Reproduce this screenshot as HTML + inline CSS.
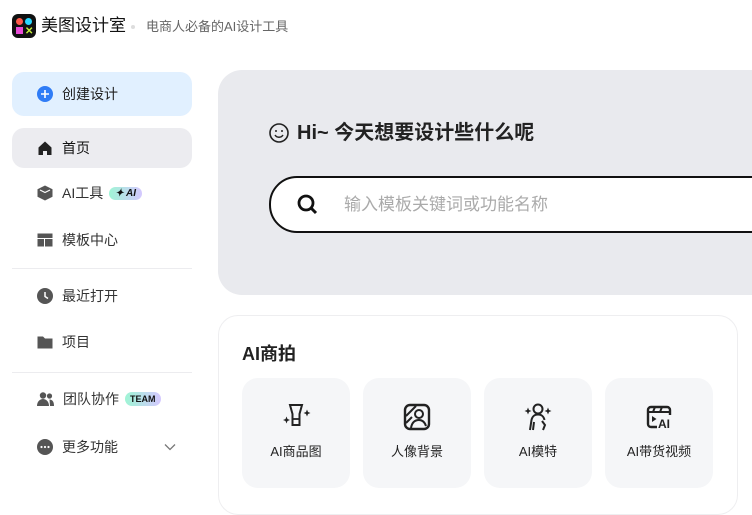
<!DOCTYPE html><html><head><meta charset="utf-8"><style>
*{margin:0;padding:0;box-sizing:border-box}
body{width:752px;height:500px;overflow:hidden;background:#fff;font-family:"Liberation Sans","Noto Sans CJK SC",sans-serif;position:relative;color:#222}
.a{position:absolute}
.item{position:absolute;left:12px;width:180px;height:40px;display:flex;align-items:center;padding-left:25px;font-size:14px;color:#333;border-radius:12px}
.item svg{margin-right:9px;flex:none}
.div{position:absolute;left:12px;width:180px;height:1px;background:#ececef}
.tile{position:absolute;top:378px;width:108px;height:110px;background:#f5f6f8;border-radius:16px;text-align:center;font-size:13px;color:#222}
.tile svg{position:absolute;left:39px;top:24px}
.tile span{position:absolute;left:0;right:0;top:63px}
</style></head><body>
<div class="a" style="left:12px;top:14px;width:24px;height:24px;background:#111;border-radius:6px">
<div class="a" style="left:4px;top:4px;width:7px;height:7px;border-radius:50%;background:#ff5a4a"></div>
<div class="a" style="left:13px;top:4px;width:7px;height:7px;border-radius:50%;background:#2ad8ff"></div>
<div class="a" style="left:4px;top:13px;width:7px;height:7px;background:#e94bd6"></div>
<div class="a" style="left:13px;top:12px;color:#c7f03a;font-size:10px;font-weight:bold">✕</div></div>
<div class="a" style="left:41px;top:15px;font-size:17px;line-height:22px;color:#111">美图设计室</div>
<div class="a" style="left:131px;top:25px;width:4px;height:4px;border-radius:50%;background:#ddd"></div>
<div class="a" style="left:146px;top:18px;font-size:13px;line-height:18px;color:#666">电商人必备的AI设计工具</div>

<div class="item" style="top:72px;height:44px;background:#e1f0ff;color:#222"><svg width="16" height="16"><circle cx="8" cy="8" r="8" fill="#2f7cf6"/><path d="M8 4v8M4 8h8" stroke="#fff" stroke-width="1.6"/></svg>创建设计</div>
<div class="item" style="top:128px;background:#ececf0;color:#111"><svg width="16" height="16"><path d="M1.5 7.5L8 1.5l6.5 6V15H10v-4H6v4H1.5z" fill="#222"/></svg>首页</div>
<div class="item" style="top:173px"><svg width="16" height="16"><path d="M8 0.5l7.5 3.8v7.5L8 15.5 0.5 11.8V4.3z" fill="#555"/><path d="M3 5l5 2.5L13 5" stroke="#fff" stroke-width="1.2" fill="none"/></svg>AI工具<span style="margin-left:6px;font-size:10px;font-weight:bold;font-style:italic;padding:1px 6px;border-radius:8px;background:linear-gradient(90deg,#9ff5d5,#d5c8ff);color:#111">✦ AI</span></div>
<div class="item" style="top:220px"><svg width="16" height="16"><rect x="0.5" y="1.5" width="15" height="4.5" fill="#555"/><rect x="0.5" y="7" width="6.5" height="7.5" fill="#555"/><rect x="8" y="7" width="7.5" height="7.5" fill="#555"/></svg>模板中心</div>
<div class="div" style="top:268px"></div>
<div class="item" style="top:276px"><svg width="16" height="16"><circle cx="8" cy="8" r="8" fill="#555"/><path d="M8 4v4.5l3 2" stroke="#fff" stroke-width="1.5" fill="none"/></svg>最近打开</div>
<div class="item" style="top:322px"><svg width="16" height="16"><path d="M0.5 2.5h5.5l2 2h7.5v10H0.5z" fill="#555"/></svg>项目</div>
<div class="div" style="top:372px"></div>
<div class="item" style="top:379px"><svg width="17" height="16"><circle cx="6" cy="4.5" r="3.2" fill="#555"/><path d="M0 15c0-4.5 3-7 6-7s6 2.5 6 7z" fill="#555"/><circle cx="12.5" cy="5" r="2.6" fill="#555"/><path d="M12.5 8.5c3 0 4.5 2.5 4.5 6.5h-4z" fill="#555"/></svg>团队协作<span style="margin-left:6px;font-size:9px;font-weight:bold;padding:2px 5px;border-radius:8px;background:linear-gradient(90deg,#9ff5d5,#d5c8ff);color:#111">TEAM</span></div>
<div class="item" style="top:427px"><svg width="16" height="16"><circle cx="8" cy="8" r="8" fill="#555"/><circle cx="4.5" cy="8" r="1.1" fill="#fff"/><circle cx="8" cy="8" r="1.1" fill="#fff"/><circle cx="11.5" cy="8" r="1.1" fill="#fff"/></svg>更多功能<svg style="position:absolute;left:152px" width="12" height="8"><path d="M1 1.5l5 5 5-5" stroke="#777" stroke-width="1.3" fill="none"/></svg></div>

<div class="a" style="left:218px;top:70px;width:560px;height:225px;background:#e9eaee;border-radius:24px"></div>
<svg class="a" style="left:268px;top:122px" width="22" height="22"><circle cx="11" cy="11" r="9" stroke="#222" stroke-width="1.6" fill="none"/><circle cx="8" cy="9" r="1" fill="#222"/><circle cx="14" cy="9" r="1" fill="#222"/><path d="M7 13c2 3 6 3 8 0" stroke="#222" stroke-width="1.5" fill="none"/></svg>
<div class="a" style="left:297px;top:120px;font-size:20px;line-height:26px;font-weight:bold;color:#222">Hi~ 今天想要设计些什么呢</div>
<div class="a" style="left:269px;top:176px;width:520px;height:57px;background:#fff;border:2px solid #111;border-radius:28px"></div>
<svg class="a" style="left:296px;top:193px" width="24" height="24"><circle cx="10" cy="10" r="7" stroke="#111" stroke-width="2.8" fill="none"/><path d="M15 15l5 5" stroke="#111" stroke-width="3"/></svg>
<div class="a" style="left:344px;top:193px;font-size:17px;line-height:24px;color:#aaa">输入模板关键词或功能名称</div>

<div class="a" style="left:218px;top:315px;width:520px;height:200px;border:1px solid #eeeef0;border-radius:20px"></div>
<div class="a" style="left:242px;top:340px;font-size:18px;font-weight:bold;color:#222">AI商拍</div>
<div class="tile" style="left:242px"><svg width="30" height="30"><path d="M9 3h12l-2.5 9v11h-7V12z" stroke="#222" stroke-width="2" fill="none"/><path d="M12 17h6" stroke="#222" stroke-width="1.8"/><path d="M4.5 17l1-2.5 1 2.5 2.5 1-2.5 1-1 2.5-1-2.5-2.5-1zM25 10l1-2.5 1 2.5 2.5 1-2.5 1-1 2.5-1-2.5-2.5-1z" fill="#222"/></svg><span>AI商品图</span></div>
<div class="tile" style="left:363px"><svg width="30" height="30"><rect x="3" y="3" width="24" height="24" rx="5" stroke="#222" stroke-width="2.4" fill="none"/><circle cx="17" cy="12" r="4" stroke="#222" stroke-width="2" fill="none"/><path d="M9 26c1-6 4-8 8-8s6 3 7 6M4 14l10-10M4 21l6-6" stroke="#222" stroke-width="2" fill="none"/></svg><span>人像背景</span></div>
<div class="tile" style="left:484px"><svg width="30" height="30"><circle cx="15" cy="7" r="4.5" stroke="#222" stroke-width="2" fill="none"/><path d="M7 28l1.5-10c1-4 3-5.5 6.5-5.5s5.5 1.5 6.5 5.5M11 20l-1 8M19 19l3 4-2 5" stroke="#222" stroke-width="2" fill="none"/><path d="M4 8l1-2.5 1 2.5 2.5 1-2.5 1-1 2.5-1-2.5-2.5-1zM24 8l1-2.5 1 2.5 2.5 1-2.5 1-1 2.5-1-2.5-2.5-1z" fill="#222"/></svg><span>AI模特</span></div>
<div class="tile" style="left:605px"><svg width="30" height="30"><path d="M13 25H7a3 3 0 01-3-3V8a3 3 0 013-3h16a3 3 0 013 3v5" stroke="#222" stroke-width="2.4" fill="none"/><path d="M4 10h22M11 5l-2 5M18 5l-2 5" stroke="#222" stroke-width="2"/><path d="M8 14v6l4.5-3z" fill="#222"/><text x="14" y="26" font-size="12" font-weight="bold" font-family="Liberation Sans" fill="#222">AI</text></svg><span>AI带货视频</span></div>
</body></html>
